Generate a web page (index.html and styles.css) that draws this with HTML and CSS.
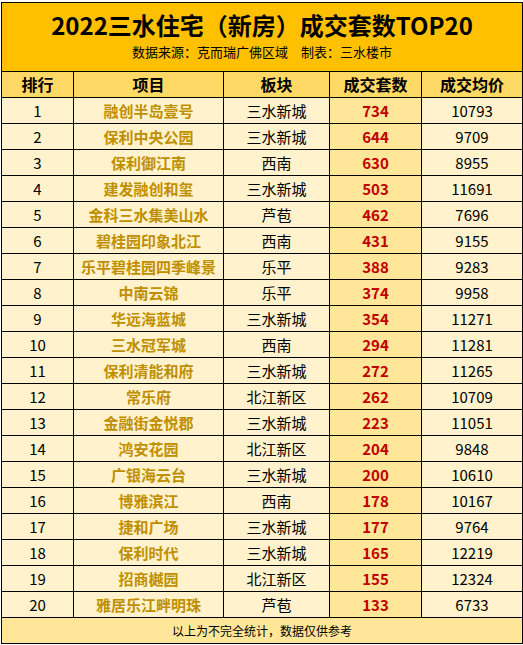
FILE: index.html
```html
<!DOCTYPE html>
<html lang="zh-CN">
<head>
    <meta charset="UTF-8">
    <title>2022三水住宅（新房）成交套数TOP20</title>
    <link rel="stylesheet" href="styles.css">
</head>
<body>
    <table class="rank">
        <colgroup>
            <col class="c-no">
            <col class="c-name">
            <col class="c-area">
            <col class="c-deal">
            <col class="c-price">
        </colgroup>
        <tr class="title-row">
            <td colspan="5">
                <div class="title">2022三水住宅（新房）成交套数TOP20</div>
                <div class="sub">数据来源：克而瑞广佛区域&emsp;制表：三水楼市</div>
            </td>
        </tr>
        <tr class="head">
            <th>排行</th>
            <th>项目</th>
            <th>板块</th>
            <th>成交套数</th>
            <th>成交均价</th>
        </tr>
        <tr><td>1</td><td class="name">融创半岛壹号</td><td>三水新城</td><td class="deal">734</td><td>10793</td></tr>
        <tr><td>2</td><td class="name">保利中央公园</td><td>三水新城</td><td class="deal">644</td><td>9709</td></tr>
        <tr><td>3</td><td class="name">保利御江南</td><td>西南</td><td class="deal">630</td><td>8955</td></tr>
        <tr><td>4</td><td class="name">建发融创和玺</td><td>三水新城</td><td class="deal">503</td><td>11691</td></tr>
        <tr><td>5</td><td class="name">金科三水集美山水</td><td>芦苞</td><td class="deal">462</td><td>7696</td></tr>
        <tr><td>6</td><td class="name">碧桂园印象北江</td><td>西南</td><td class="deal">431</td><td>9155</td></tr>
        <tr><td>7</td><td class="name">乐平碧桂园四季峰景</td><td>乐平</td><td class="deal">388</td><td>9283</td></tr>
        <tr><td>8</td><td class="name">中南云锦</td><td>乐平</td><td class="deal">374</td><td>9958</td></tr>
        <tr><td>9</td><td class="name">华远海蓝城</td><td>三水新城</td><td class="deal">354</td><td>11271</td></tr>
        <tr><td>10</td><td class="name">三水冠军城</td><td>西南</td><td class="deal">294</td><td>11281</td></tr>
        <tr><td>11</td><td class="name">保利清能和府</td><td>三水新城</td><td class="deal">272</td><td>11265</td></tr>
        <tr><td>12</td><td class="name">常乐府</td><td>北江新区</td><td class="deal">262</td><td>10709</td></tr>
        <tr><td>13</td><td class="name">金融街金悦郡</td><td>三水新城</td><td class="deal">223</td><td>11051</td></tr>
        <tr><td>14</td><td class="name">鸿安花园</td><td>北江新区</td><td class="deal">204</td><td>9848</td></tr>
        <tr><td>15</td><td class="name">广银海云台</td><td>三水新城</td><td class="deal">200</td><td>10610</td></tr>
        <tr><td>16</td><td class="name">博雅滨江</td><td>西南</td><td class="deal">178</td><td>10167</td></tr>
        <tr><td>17</td><td class="name">捷和广场</td><td>三水新城</td><td class="deal">177</td><td>9764</td></tr>
        <tr><td>18</td><td class="name">保利时代</td><td>三水新城</td><td class="deal">165</td><td>12219</td></tr>
        <tr><td>19</td><td class="name">招商樾园</td><td>北江新区</td><td class="deal">155</td><td>12324</td></tr>
        <tr><td>20</td><td class="name">雅居乐江畔明珠</td><td>芦苞</td><td class="deal">133</td><td>6733</td></tr>
        <tr class="foot">
            <td colspan="5">以上为不完全统计，数据仅供参考</td>
        </tr>
    </table>
</body>
</html>
```

FILE: styles.css
```css
body {
    margin: 0;
    padding: 2px 0 0 1px;
    background: #fff;
    font-family: "Noto Sans CJK SC", "Noto Sans", sans-serif;
    color: #000;
}
.rank {
    border-collapse: collapse;
    table-layout: fixed;
    width: 521px;
}
.c-no { width: 72px; }
.c-name { width: 150px; }
.c-area { width: 106px; }
.c-deal { width: 92px; }
.c-price { width: 101px; }
.rank td,
.rank th {
    border: 1px solid #000;
    height: 25px;
    padding: 0;
    text-align: center;
    font-size: 15px;
    line-height: 25px;
    background: #fff2cc;
    white-space: nowrap;
    overflow: hidden;
}
.title-row td {
    height: 68px;
    background: #ffc000;
    line-height: normal;
}
.title {
    font-size: 24px;
    font-weight: bold;
    line-height: 30px;
    margin-top: 4px;
}
.sub {
    font-size: 13px;
    line-height: 18px;
    margin-top: 3px;
    margin-bottom: 8px;
}
.head th {
    background: #ffd966;
    font-size: 16px;
    font-weight: bold;
}
.rank td.name {
    color: #bf8f00;
    font-weight: bold;
}
.rank td.deal {
    background: #ffe699;
    color: #c00000;
    font-weight: bold;
}
.foot td {
    background: #ffe699;
    font-size: 12px;
}
```
